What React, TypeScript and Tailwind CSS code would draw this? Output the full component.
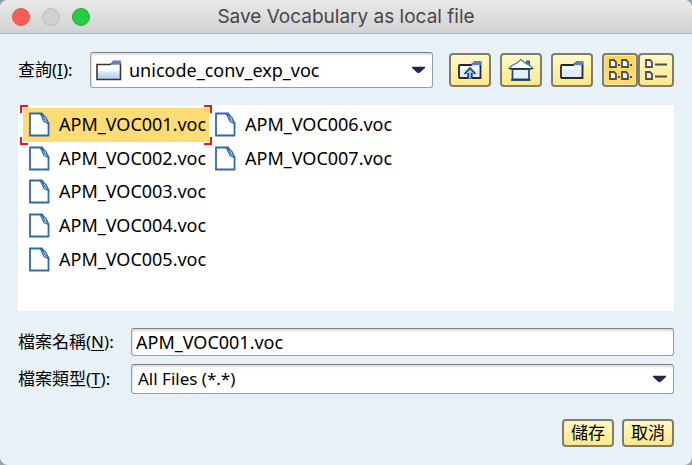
import { useState, type ReactNode } from "react";

const files = [
  "APM_VOC001.voc",
  "APM_VOC002.voc",
  "APM_VOC003.voc",
  "APM_VOC004.voc",
  "APM_VOC005.voc",
  "APM_VOC006.voc",
  "APM_VOC007.voc",
];

function Folder() {
  return (
    <svg width="26" height="21" viewBox="0 0 26 21" aria-hidden="true">
      <defs>
        <linearGradient id="folderFill" x1="0" y1="0" x2="0" y2="1">
          <stop offset="0.4" stopColor="#fff" />
          <stop offset="0.6" stopColor="#d3e4f4" />
          <stop offset="1" stopColor="#a9cbe8" />
        </linearGradient>
      </defs>
      <path d="M1 4.5 H14 L16 3.5 H24.5 V19.5 H1 Z" fill="url(#folderFill)" stroke="#34363c" strokeWidth="1.6" />
      <path d="M14 4.5 L17 0.5 H25 V4.5 Z" fill="#5b80c6" />
    </svg>
  );
}

function SmallFolder({ up = false }: { up?: boolean }) {
  return (
    <svg width="24" height="20" viewBox="0 0 24 20" aria-hidden="true">
      <path d="M1 6 Q1 5 2 5 H13 L15 4 H22.5 V18 H2 Q1 18 1 17 Z" fill="#dcebf8" stroke="#26282e" strokeWidth="1.8" />
      <path d="M2.5 6.5 H21 V9.5 H2.5 Z" fill="#fff" />
      <path d="M13.5 5 L16 1 H23.5 V5 Z" fill="#5b80c6" />
      {up && (
        <>
          <path d="M10 18.5 V14 H6.5 L12 8 L17.5 14 H14 V18.5 Z" fill="#9cc9f0" />
          <path
            d="M6.5 14 L12 8 L17.5 14 M10.2 18.5 V13 M13.8 18.5 V13"
            fill="none"
            stroke="#1f4066"
            strokeWidth="1.8"
          />
        </>
      )}
    </svg>
  );
}

function House() {
  return (
    <svg width="26" height="24" viewBox="0 0 26 24" aria-hidden="true">
      <path d="M4.5 11 H21 V21.5 H4.5 Z" fill="#e6f0fa" stroke="#1f4f7c" strokeWidth="1.8" />
      <path d="M18.5 7 V3 H21.5 V8" fill="#4f7fb4" stroke="#1f4f7c" strokeWidth="1" />
      <path d="M1 10.5 L4 7.5 L9 5 L13 1.5 L17 5 L22 7.5 L25 10.5 Z" fill="#fff" stroke="#3a7a9c" strokeWidth="1.2" />
      <path d="M1.5 10.8 H24.5 M3 22 H22.5" stroke="#26384c" strokeWidth="1.6" />
    </svg>
  );
}

function GridView() {
  return (
    <svg width="25" height="24" viewBox="0 0 25 24" aria-hidden="true" fill="#f2f6fa" stroke="#4c4e4a" strokeWidth="1.8">
      <path d="M2 2 H6 L8 4 V9 H2 Z M14 2 H18 L20 4 V9 H14 Z M2 14 H6 L8 16 V21 H2 Z M14 14 H18 L20 16 V21 H14 Z" />
      <path d="M10 7 H12 M22 7 H24 M10 19 H12 M22 19 H24" />
    </svg>
  );
}

function ListView() {
  return (
    <svg width="25" height="24" viewBox="0 0 25 24" aria-hidden="true" fill="#f2f6fa" stroke="#4c4e4a" strokeWidth="1.8">
      <path d="M2 2 H6 L8 4 V9 H2 Z M2 14 H6 L8 16 V21 H2 Z" />
      <path d="M11 6.5 H23 M11 18.5 H23" />
    </svg>
  );
}

function Page() {
  return (
    <svg className="shrink-0" width="21" height="25" viewBox="0 0 21 25" aria-hidden="true">
      <path d="M1 1.5 H13 L19.5 11 V23.5 H1 Z" fill="#fff" stroke="#2f6ba8" strokeWidth="1.8" />
      <path d="M11.5 2 L15 9.5 L19.5 11.5 L17 5.5 Z" fill="#dceaf6" stroke="#2f6ba8" strokeWidth="1.2" />
      <path d="M13.5 3.5 L16 8 M14.5 7 L18 9" stroke="#2f6ba8" strokeWidth="1" />
    </svg>
  );
}

function Arrow() {
  return (
    <svg width="13" height="7" viewBox="0 0 13 7" aria-hidden="true" className="pointer-events-none absolute right-2 top-1/2 -translate-y-1/2">
      <path d="M0 0 H13 V1.5 L8 6 Q6.5 7.5 5 6 L0 1.5 Z" fill="#262450" />
    </svg>
  );
}

const field =
  "w-full appearance-none rounded-[3px] border border-[#9a9da0] border-t-[#7d8083] bg-white text-black shadow-[inset_1px_2px_2px_#d9dbdd] outline-none";
const frame = "flex items-center justify-center rounded-[4px] border-2 border-[#807d6c] bg-linear-to-b";
const yellow = "from-[#fff8c8] to-[#fee88a]";
const pressed = "from-[#fad65c] to-[#fbdb72] shadow-[inset_0_0_0_1px_#fdeaa8]";

type ToolProps = { label: string; width?: string; active?: boolean; children: ReactNode };

function Tool({ label, width = "w-[42px]", active, children }: ToolProps) {
  return (
    <button type="button" aria-label={label} aria-pressed={active} className={`${frame} ${active ? pressed : yellow} h-[34px] ${width}`}>
      {children}
    </button>
  );
}

function Corners() {
  return (
    <span aria-hidden="true" className="pointer-events-none absolute -inset-x-[3px] -inset-y-[3px]">
      <span className="absolute left-0 top-0 size-2 border-l-2 border-t-2 border-[#f0141e]" />
      <span className="absolute right-0 top-0 size-2 border-r-2 border-t-2 border-[#f0141e]" />
      <span className="absolute bottom-0 left-0 size-2 border-b-2 border-l-2 border-[#f0141e]" />
      <span className="absolute bottom-0 right-0 size-2 border-b-2 border-r-2 border-[#f0141e]" />
    </span>
  );
}

export default function App() {
  const [selected, setSelected] = useState(files[0]);

  return (
    <div className="min-h-screen bg-[#98a2a9] font-['Noto_Sans','Noto_Sans_CJK_TC',sans-serif] text-[17px] text-black">
      <main className="flex min-h-screen flex-col overflow-hidden rounded-lg bg-[#e8f1f6]">
        <header className="grid h-[34px] grid-cols-[1fr_auto_1fr] items-center border-b border-[#b4b4b4] bg-linear-to-b from-[#e9e9e9] to-[#d2d2d2] px-3">
          <div className="flex gap-3">
            <button type="button" aria-label="Close" className="size-[18px] rounded-full border border-[#e9524d] bg-[#fc5d59]" />
            <button type="button" aria-label="Minimize" className="size-[18px] rounded-full border border-[#bdbdbd] bg-[#d0d0cf]" />
            <button type="button" aria-label="Zoom" className="size-[18px] rounded-full border border-[#22b136] bg-[#28cc42]" />
          </div>
          <h1 className="font-[Inter,sans-serif] text-[19px] leading-6 text-[#474747]">Save Vocabulary as local file</h1>
        </header>

        <div className="flex flex-1 flex-col px-[18px] pt-[18px] pb-[18px]">
          <div className="flex items-center">
            <label htmlFor="folder" className="w-[72px] shrink-0">
              查詢(<u className="underline-offset-2">I</u>):
            </label>
            <div className="relative flex-1">
              <select id="folder" className={`${field} h-9 pl-[38px] pr-7 text-[18px]`}>
                <option>unicode_conv_exp_voc</option>
              </select>
              <span className="pointer-events-none absolute left-[6px] top-2">
                <Folder />
              </span>
              <Arrow />
            </div>
            <div className="ml-4 flex gap-[9px]">
              <Tool label="Up one level"><SmallFolder up /></Tool>
              <Tool label="Home"><House /></Tool>
              <Tool label="New folder"><SmallFolder /></Tool>
              <div className="flex">
                <Tool label="Icon view" width="w-[36px]" active><GridView /></Tool>
                <Tool label="List view" width="w-[36px]"><ListView /></Tool>
              </div>
            </div>
          </div>

          <div className="mt-[17px] min-h-[206px] flex-1 bg-white pl-[5px] pt-[3px]">
            <ul className="grid h-[168px] grid-flow-col grid-cols-[repeat(2,186px)] grid-rows-5 text-[18px]">
              {files.map((name) => (
                <li key={name}>
                  <button
                    type="button"
                    aria-pressed={name === selected}
                    onClick={() => setSelected(name)}
                    className={`relative flex h-full w-full items-center gap-[9px] pl-[6px] ${name === selected ? "bg-[#fedc75]" : ""}`}
                  >
                    <Page />
                    {name}
                    {name === selected && <Corners />}
                  </button>
                </li>
              ))}
            </ul>
          </div>

          <div className="mt-[17px] grid grid-cols-[113px_1fr] items-center gap-y-2">
            <label htmlFor="name">
              檔案名稱(<u className="underline-offset-2">N</u>):
            </label>
            <input
              id="name"
              value={selected}
              onChange={(e) => setSelected(e.target.value)}
              className={`${field} h-7 px-1 text-[18px]`}
            />
            <label htmlFor="type">
              檔案類型(<u className="underline-offset-2">T</u>):
            </label>
            <div className="relative">
              <select id="type" className={`${field} h-[30px] pl-[6px] pr-7`}>
                <option>All Files (*.*)</option>
              </select>
              <Arrow />
            </div>
          </div>

          <div className="mt-[25px] flex justify-end gap-2">
            <button type="submit" className={`${frame} ${yellow} h-7 w-[52px]`}>儲存</button>
            <button type="button" className={`${frame} ${yellow} h-7 w-[52px]`}>取消</button>
          </div>
        </div>
      </main>
    </div>
  );
}
